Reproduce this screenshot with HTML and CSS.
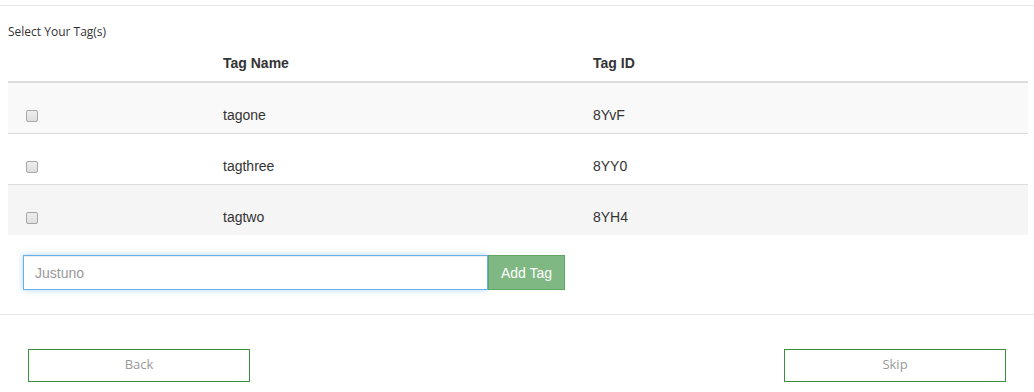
FILE: index.html
```html
<!DOCTYPE html>
<html lang="en">

<head>
    <meta charset="UTF-8">
    <meta name="viewport" content="width=device-width, initial-scale=1.0">
    <title>Select Tags</title>
    <link rel="stylesheet" href="styles.css">
</head>

<body>
    <div class="top-rule"></div>

    <div class="tag-panel">
        <p class="panel-label">Select Your Tag(s)</p>

        <table class="tag-table">
            <thead>
                <tr>
                    <th class="col-check"></th>
                    <th class="col-name">Tag Name</th>
                    <th>Tag ID</th>
                </tr>
            </thead>
            <tbody>
                <tr class="row-odd">
                    <td class="col-check"><input type="checkbox"></td>
                    <td>tagone</td>
                    <td>8YvF</td>
                </tr>
                <tr>
                    <td class="col-check"><input type="checkbox"></td>
                    <td>tagthree</td>
                    <td>8YY0</td>
                </tr>
                <tr class="row-hover">
                    <td class="col-check"><input type="checkbox"></td>
                    <td>tagtwo</td>
                    <td>8YH4</td>
                </tr>
            </tbody>
        </table>

        <div class="add-tag">
            <input type="text" class="tag-input" placeholder="Justuno">
            <button class="add-button">Add Tag</button>
        </div>
    </div>

    <div class="footer">
        <button class="nav-button">Back</button>
        <button class="nav-button">Skip</button>
    </div>
</body>

</html>
```

FILE: styles.css
```css
body {
    margin: 0;
    font-family: "Liberation Sans", Arial, sans-serif;
    font-size: 14px;
    color: #333;
    background-color: white;
}

.top-rule {
    margin-top: 5px;
    border-top: 1px solid #e8e8e8;
}

.tag-panel {
    padding: 0 6px 0 8px;
}

.panel-label {
    font-family: "Open Sans", sans-serif;
    font-size: 12px;
    margin: 17px 0 0 0;
    line-height: 18px;
}

.tag-table {
    width: 100%;
    border-collapse: collapse;
    margin-top: 3px;
}

.tag-table th,
.tag-table td {
    box-sizing: border-box;
    text-align: left;
    padding: 8px;
    line-height: 20px;
}

.tag-table th {
    font-weight: bold;
    padding-top: 9px;
    padding-bottom: 8px;
    border-bottom: 2px solid #ddd;
}

.tag-table td {
    height: 51px;
    padding-top: 16px;
    padding-bottom: 1px;
    border-top: 1px solid #ddd;
}

.tag-table tbody tr:first-child td {
    height: 51px;
    border-top: none;
}

.col-check {
    width: 207px;
}

.col-name {
    width: 370px;
}

.tag-table td.col-check {
    padding-left: 18px;
}

.tag-table input[type="checkbox"] {
    appearance: none;
    -webkit-appearance: none;
    margin: 0;
    width: 12px;
    height: 12px;
    border: 1px solid #a6a6a6;
    border-radius: 2px;
    background: linear-gradient(#ededed, #dedede);
    vertical-align: -2px;
}

.row-odd {
    background-color: #f9f9f9;
}

.row-hover {
    background-color: #f5f5f5;
}

.add-tag {
    display: flex;
    margin: 20px 0 0 15px;
}

.tag-input {
    width: 465px;
    height: 35px;
    box-sizing: border-box;
    border: 1px solid #66afe9;
    box-shadow: inset 0 1px 1px rgba(0, 0, 0, 0.075), 0 0 6px rgba(102, 175, 233, 0.5);
    padding: 6px 11px;
    font-family: "Liberation Sans", Arial, sans-serif;
    font-size: 14px;
    color: #555;
    outline: none;
}

.tag-input::placeholder {
    color: #999;
}

.add-button {
    width: 77px;
    height: 35px;
    box-sizing: border-box;
    background-color: #80b883;
    border: 1px solid #5ea763;
    color: white;
    font-family: "Liberation Sans", Arial, sans-serif;
    font-size: 14px;
    padding: 0;
}

.footer {
    margin-top: 24px;
    border-top: 1px solid #e5e5e5;
    padding: 34px 28px 0 28px;
    display: flex;
    justify-content: space-between;
}

.nav-button {
    width: 222px;
    height: 33px;
    background-color: white;
    border: 1px solid #3a8f3e;
    color: #999;
    font-family: "Open Sans", sans-serif;
    font-size: 13px;
    padding: 0 0 4px 0;
}
```
